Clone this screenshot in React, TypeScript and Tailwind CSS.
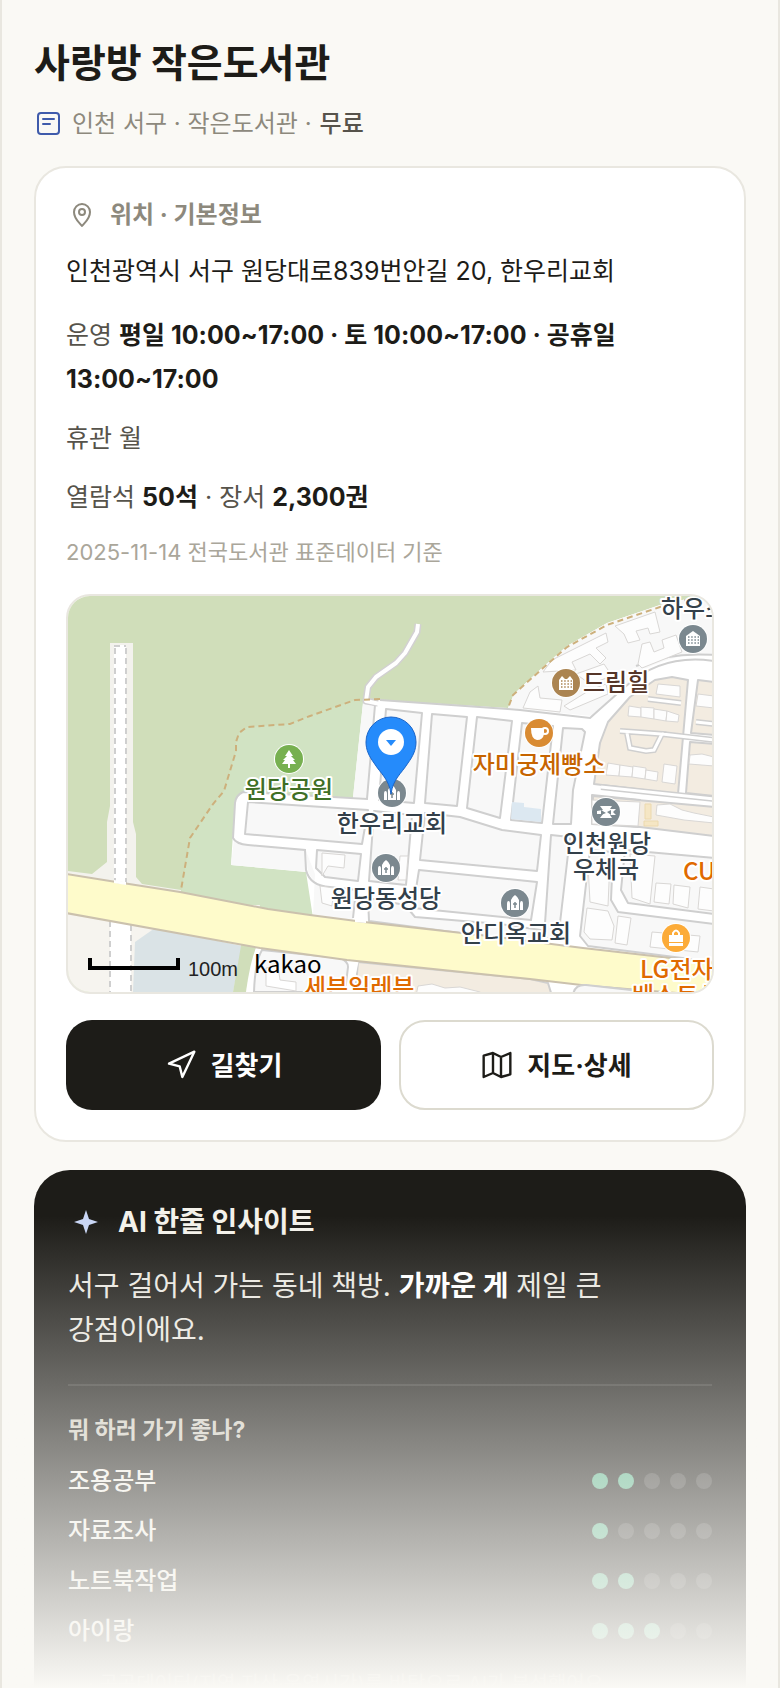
import React from 'react';

interface Purpose {
    label: string;
    score: number;
}

interface Place {
    name: string;
    x: number;
    y: number;
    color: string;
    anchor?: 'start' | 'middle';
}

const PURPOSES: Purpose[] = [
    { label: '조용공부', score: 2 },
    { label: '자료조사', score: 1 },
    { label: '노트북작업', score: 2 },
    { label: '아이랑', score: 3 },
];

const PLACES: Place[] = [
    { name: '하우스', x: 661, y: 617, color: '#33404a', anchor: 'start' },
    { name: '드림힐', x: 583, y: 691, color: '#553528', anchor: 'start' },
    { name: '자미궁제빵소', x: 539, y: 773, color: '#c66400' },
    { name: '원당공원', x: 289, y: 798, color: '#3f6f26' },
    { name: '한우리교회', x: 392, y: 832, color: '#33404a' },
    { name: '원당동성당', x: 386, y: 907, color: '#33404a' },
    { name: '안디옥교회', x: 516, y: 942, color: '#33404a' },
    { name: '인천원당', x: 607, y: 852, color: '#33404a' },
    { name: '우체국', x: 606, y: 878, color: '#33404a' },
    { name: 'CU', x: 683, y: 880, color: '#e06a00', anchor: 'start' },
    { name: 'LG전자', x: 640, y: 978, color: '#e06a00', anchor: 'start' },
    { name: '베스트샵', x: 632, y: 1004, color: '#e06a00', anchor: 'start' },
    { name: '세븐일레븐', x: 304, y: 996, color: '#e06a00', anchor: 'start' },
];

// city blocks between the streets
const BLOCKS = [
    'M386 709 422 713 414 803 379 800Z',
    'M432 714 467 717 457 806 425 803Z',
    'M477 717 512 721 500 818 467 808Z',
    'M522 723 553 726 542 823 511 820Z',
    'M563 728 582 729 585 732 573 790 571 824 553 824Z',
    'M248 802 368 810 362 844 245 834Z',
    'M374 811 412 815 406 885 369 881Z',
    'M317 850 361 854 358 881 325 877 316 868Z',
    'M425 813 460 817 502 830 541 835 537 871 420 860Z',
    'M419 870 537 882 531 920 413 908Z',
    'M368 898 405 905 415 917 500 924 541 930 539 942 475 935 369 921Z',
    'M551 835 570 837 558 940 544 938Z',
    'M590 850 613 852 611 900 618 912 714 924 714 962 588 946 580 936Z',
    'M625 850 714 858 714 914 628 903 621 890Z',
    'M592 795 640 800 638 827 592 824Z',
];

const ORANGE_BLOCKS = [
    'M600 743 608 722 630 697 655 680 672 677 688 680 678 794 594 784Z',
    'M698 680 714 682 714 735 691 733Z',
    'M690 742 714 744 714 796 686 793Z',
    'M593 796 714 807 714 836 640 827 592 822Z',
    'M358 962 530 979 548 983 552 996 355 996Z',
];

const BUILDINGS = [
    'M615 626 655 612 660 632 650 634 648 628 636 631 640 640 628 643 624 634Z',
    'M638 664 642 644 650 642 654 652 664 648 662 640 676 635 682 652 642 668Z',
    'M543 672 552 660 572 650 606 633 608 642 596 648 606 658 600 664 590 654 572 662 576 670Z',
    'M523 708 530 692 538 686 540 698 562 700 560 712 542 710Z',
    'M564 706 590 690 606 684 608 694 570 710Z',
    'M576 674 604 664 612 676 590 684Z',
    'M658 684 680 686 680 697 656 694Z',
    'M629 706 641 708 641 717 628 716Z',
    'M641 707 654 708 654 719 641 717Z',
    'M654 709 667 711 666 721 654 719Z',
    'M667 711 679 715 678 722 666 721Z',
    'M608 763 620 765 619 776 606 775Z',
    'M620 765 633 767 632 777 619 776Z',
    'M633 766 646 768 645 779 632 777Z',
    'M646 770 658 772 657 781 645 779Z',
    'M664 764 677 766 675 784 662 782Z',
    'M698 694 714 696 714 708 696 706Z',
    'M690 755 702 754 714 757 714 766 689 764Z',
    'M657 805 670 804 682 810 694 813 714 817 714 823 684 820 656 815Z',
    'M592 800 640 802 638 826 592 824Z',
    'M322 853 345 855 344 868 328 866 322 876Z',
    'M400 856 408 856 406 880 398 880Z',
    'M588 865 610 860 608 906 590 902Z',
    'M630 854 655 856 650 904 632 898Z',
    'M656 883 671 884 669 904 654 902Z',
    'M674 885 690 887 688 908 673 904Z',
    'M700 887 714 889 714 911 698 909Z',
    'M587 908 608 911 614 926 612 940 590 939 584 932Z',
    'M618 916 631 918 627 945 615 943Z',
    'M652 932 700 936 698 952 650 947Z',
    'M320 886 334 888 332 906 322 903Z',
    'M418 986 432 984 445 988 460 987 480 992 486 996 416 996Z',
];

const LANES = [
    'M648 699 681 703',
    'M620 731 662 734 654 750 646 751 630 748 627 733M662 734 714 740',
    'M696 722 714 724',
    'M601 787 714 799',
];

const DASHES = 'M690 599 660 607 607 625 567 647 543 668 513 695 508 708M380 699 355 700 310 716 290 724 247 727 239 733 236 742 236 751 224 791 213 804 190 838 181 890';

const MapMarker: React.FC<{ x: number; y: number; fill: string; children: React.ReactNode }> = ({ x, y, fill, children }) => (
    <g transform={`translate(${x} ${y})`}>
        <circle r="15" fill="#fff" />
        <circle r="14" fill={fill} />
        {children}
    </g>
);

const Church = () => (
    <>
        <path d="M-4 7V-3Q-3-6 0-8 3-6 4-3V7ZM-8 7V1Q-8-2-6.5-2-5-2-5 1V7ZM8 7V1Q8-2 6.5-2 5-2 5 1V7Z" fill="#fff" />
        <path d="M0-1v6M-2 1h4" stroke="#7b888f" strokeWidth="1.5" />
    </>
);

const House = ({ dots }: { dots: string }) => (
    <>
        <path d="M-7 7V-3L-4-7-1-4 1-4 4-7 7-3V7Z" fill="#fff" />
        <path d="M-5-2H6M-5 1H6M-5 4H6" stroke={dots} strokeWidth="1.5" strokeDasharray="1.5 1.7" />
    </>
);

const Tower = () => (
    <>
        <path d="M-7 7V-3L0-8 7-3V7Z" fill="#fff" />
        <path d="M-5-2H6M-5 1H6M-5 4H6" stroke="#7b888f" strokeWidth="1.5" strokeDasharray="1.5 1.7" />
    </>
);

const LibraryMap = () => (
    <svg viewBox="68 596 644 396" className="block w-full" role="img" aria-label="사랑방 작은도서관 주변 지도">
        <rect x="68" y="596" width="644" height="396" fill="#d0deba" />
        <path d="M363 702 355 700 310 716 290 724 247 727 239 733 236 742 236 751 224 791 213 804 190 838 181 892 330 924 370 700Z" fill="#d1e3c3" />
        <path d="M68 871 92 874 107 862 107 822 110 806V643H133V822L136 834V877L142 884 181 890V900L68 890Z" fill="#f3f2ed" />
        <path d="M114 645H126V890H114Z" fill="#fff" />
        <path d="M114 646H126M115 648V884M126 648V884" stroke="#cfcfcf" strokeWidth="2" strokeDasharray="6 4" fill="none" />

        <path d="M363 703 378 700 508 708 514 694 543 667 567 646 607 623 660 605 700 596H714V1000H350L313 918 306 872 231 865 235 800 242 792 353 798Z" fill="#fff" />
        <path d="M508 708 514 694 543 667 567 646 607 623 660 605 700 596H714V655C690 652 660 660 640 672L592 716Z" fill="#f8f8f8" />
        <path d="M363 703 375 705 367 799 353 797Z" fill="#f8f8f8" />
        <path d="M234 840 248 845 305 850 307 872 231 865Z" fill="#f8f8f8" />
        <path d="M306 851 308 872 315 883 330 887 355 890 353 920 313 915 315 874Z" fill="#f8f8f8" />

        <path d="M375 705 367 799 243 792Q236 795 235 803L233 838Q236 844 248 845L305 850 306 870Q310 886 330 887L356 890 353 918M375 705 366 702M380 700 508 709 520 710 590 718Q610 700 625 687C650 664 680 656 714 661M636 666Q670 652 714 655" fill="none" stroke="#cfcfcf" strokeWidth="2" />
        <path d="M418 624 417 632 405 653 396 663 376 677 368 687 366 701 378 703" fill="none" stroke="#d2d0d2" strokeWidth="7" strokeLinejoin="round" />
        <path d="M418 624 417 632 405 653 396 663 376 677 368 687 366 701 380 704" fill="none" stroke="#fff" strokeWidth="4" strokeLinejoin="round" />

        {BLOCKS.map((d) => (
            <path key={d} d={d} fill="#f8f8f8" stroke="#cfcfcf" strokeWidth="2" strokeLinejoin="round" />
        ))}
        {ORANGE_BLOCKS.map((d) => (
            <path key={d} d={d} fill="#f3ece1" stroke="#cfcfcf" strokeWidth="2" strokeLinejoin="round" />
        ))}
        {LANES.map((d) => (
            <g key={d} fill="none">
                <path d={d} stroke="#cfcfcf" strokeWidth="6" />
                <path d={d} stroke="#fff" strokeWidth="3" />
            </g>
        ))}
        {BUILDINGS.map((d) => (
            <path key={d} d={d} fill="#fdfdfd" stroke="#d9d7d5" strokeWidth="1" />
        ))}
        <path d="M512 802 524 803 524 807 541 809 541 822 511 819Z" fill="#dce8f1" />
        <path d="M645 804h6v15h-6ZM644 821h14v5h-14Z" fill="#f5e6c4" stroke="#ecd9ae" />
        <path d={DASHES} fill="none" stroke="#cdb07c" strokeWidth="2" strokeDasharray="6 4" />

        {/* lower left corner, under the main road */}
        <path d="M68 905H260L246 992H68Z" fill="#f6f4ef" />
        <path d="M135 942 155 928 242 946 233 992H133Z" fill="#dae3e6" />
        <path d="M242 940 257 942 253 955 246 992H233Z" fill="#d0deba" />
        <path d="M257 945 360 955 352 992H246Q250 962 257 945Z" fill="#fff" />
        <path d="M262 950 340 958Q348 961 348 967L345 992H254Q255 962 262 950Z" fill="#f8f8f8" stroke="#cfcfcf" strokeWidth="2" />
        <path d="M266 968 278 966 280 980 296 982 296 991 266 986Z" fill="#fff" stroke="#d9d7d5" />
        <path d="M110 915H131V992H110Z" fill="#fff" />
        <path d="M110 921V992M131 925V992" stroke="#cfcfcf" strokeWidth="2" strokeDasharray="6 4" />

        <path d="M66 874 110 881 180 892 268 909 310 915 364 922 480 935 583 948 714 963V996L590 986 530 979 347 960 260 948 66 913Z" fill="#fefbcb" stroke="#cbc1ad" strokeWidth="2" />
        <path d="M114 880 126 882V885L114 883ZM355 919 366 920 366 923 355 922Z" fill="#fff" />
        <path d="M573 996Q574 984 586 985L640 991V996Z" fill="#f8f8f8" stroke="#cfcfcf" strokeWidth="2" />

        <MapMarker x={566} y={683} fill="#ab8451"><House dots="#ab8451" /></MapMarker>
        <MapMarker x={693} y={639} fill="#7b888f"><Tower /></MapMarker>
        <MapMarker x={539} y={733} fill="#d98b33">
            <path d="M-8-5H5V1Q4 7-2 7-8 6-8-5Z" fill="#fff" />
            <circle cx="6" cy="-2" r="3" fill="none" stroke="#fff" strokeWidth="2" />
        </MapMarker>
        <MapMarker x={289} y={759} fill="#77b050">
            <path d="M0-9 4-3H2L6 1H4L7 5H1V9H-1V5H-7L-4 1H-6L-2-3H-4Z" fill="#fff" />
        </MapMarker>
        <MapMarker x={392} y={793} fill="#7b888f"><Church /></MapMarker>
        <MapMarker x={386} y={868} fill="#7b888f"><Church /></MapMarker>
        <MapMarker x={515} y={903} fill="#7b888f"><Church /></MapMarker>
        <MapMarker x={606} y={812} fill="#7b888f">
            <path d="M-6-6H6L4-3 10-3 7 0 10 3 4 3 6 6H-6L-3 2-9 2-9-1-3-2Z" fill="#fff" />
            <path d="M-5-2 0 1-5 3ZM1 0 5-2V3Z" fill="#7b888f" />
        </MapMarker>
        <MapMarker x={676} y={938} fill="#fcab38">
            <path d="M-7-3H7V4H-7ZM-7 5H7V8H-7Z" fill="#fff" />
            <path d="M-3-3V-5Q0-10 3-5V-3" fill="none" stroke="#fff" strokeWidth="2" />
        </MapMarker>

        <g fontSize="24" fontWeight="500" stroke="#fff" strokeWidth="4" strokeLinejoin="round" paintOrder="stroke" className="font-['Noto_Sans_CJK_KR',sans-serif]">
            {PLACES.map((place) => (
                <text key={place.name} x={place.x} y={place.y} fill={place.color} textAnchor={place.anchor ?? 'middle'}>
                    {place.name}
                </text>
            ))}
        </g>

        <path d="M391 794C389 779 381 774 374 763 369 756 366 750 366 742A25 25 0 0 1 416 742C416 750 413 756 408 763 401 774 393 779 391 794Z" fill="#258bfb" stroke="#1b65c8" strokeWidth="1" />
        <circle cx="391" cy="742" r="13" fill="#fff" />
        <path d="M386 740H396L391 746Z" fill="#258bfb" />

        <path d="M90 958V968H178V958" fill="none" stroke="#000" strokeWidth="4" />
        <text x="188" y="976" fontSize="20" fill="#222" className="font-['Liberation_Sans',sans-serif]">100m</text>
        <text x="254" y="973" fontSize="24" fill="#000" className="font-['Noto_Sans_CJK_KR',sans-serif]">kakao</text>
    </svg>
);

const InfoCard = () => (
    <section className="rounded-[32px] border-2 border-[#e9e7e0] bg-white px-[30px] pt-[29px] pb-[30px]">
        <h2 className="flex items-center gap-3.5 pl-0.5 text-[24px] leading-9 font-bold text-[#8d897d]">
            <svg className="h-7 w-7" viewBox="0 0 28 28" fill="none" stroke="currentColor" strokeWidth="2" strokeLinejoin="round" aria-hidden="true">
                <path d="M14 25C11 21 6 18 6 11a8 8 0 0 1 16 0c0 7-5 10-8 14Z" />
                <circle cx="14" cy="11" r="3" />
            </svg>
            위치 · 기본정보
        </h2>
        <p className="mt-1 text-[25px] leading-[68px] text-[#1d1c18]">인천광역시 서구 원당대로839번안길 20, 한우리교회</p>
        <div className="mt-2 space-y-[15px] text-[25px] leading-[44px] text-[#56534b]">
            <p>운영 <b className="font-bold text-[#1d1c18]">평일 10:00~17:00 · 토 10:00~17:00 · 공휴일 13:00~17:00</b></p>
            <p>휴관 월</p>
            <p>열람석 <b className="font-bold text-[#1d1c18]">50석</b> · 장서 <b className="font-bold text-[#1d1c18]">2,300권</b></p>
        </div>
        <p className="mt-4 text-[22px] leading-[34px] text-[#aaa69a]">2025-11-14 전국도서관 표준데이터 기준</p>
        <div className="mt-[25px] overflow-hidden rounded-3xl border-2 border-[#e9e7e0]">
            <LibraryMap />
        </div>
        <div className="mt-[26px] grid grid-cols-2 gap-[18px]">
            <button type="button" className="flex h-[90px] items-center justify-center gap-3.5 rounded-[26px] bg-[#1d1c18] text-[26px] font-bold text-white">
                <svg className="h-8 w-8" viewBox="0 0 24 24" fill="none" stroke="currentColor" strokeWidth="1.8" strokeLinejoin="round" aria-hidden="true">
                    <path d="M3 11 22 2 13 21 11 13Z" />
                </svg>
                길찾기
            </button>
            <button type="button" className="flex h-[90px] items-center justify-center gap-3.5 rounded-[26px] border-2 border-[#dcdacf] bg-white text-[26px] font-bold text-[#1d1c18]">
                <svg className="h-8 w-8" viewBox="0 0 24 24" fill="none" stroke="currentColor" strokeWidth="1.8" strokeLinejoin="round" aria-hidden="true">
                    <path d="M9 3 2 5v16l7-3 6 3 7-2V3l-7 3ZM9 3v15M15 6v15" />
                </svg>
                지도·상세
            </button>
        </div>
    </section>
);

const InsightCard = () => (
    <section className="mt-7 rounded-t-[36px] bg-[#1d1c18] px-[34px] pt-[34px] pb-8">
        <h2 className="flex items-center gap-5 pl-1.5 text-[28px] leading-9 font-bold text-[#f3f1ea]">
            <svg className="h-6 w-6 text-[#c9d6f5]" viewBox="0 0 24 24" fill="currentColor" aria-hidden="true">
                <path d="M12 0 15 9 24 12 15 15 12 24 9 15 0 12 9 9Z" />
            </svg>
            AI 한줄 인사이트
        </h2>
        <p className="mt-6 text-[28px] leading-[44px] text-[#e9e7e0]">
            서구 걸어서 가는 동네 책방. <b className="font-bold text-white">가까운 게</b> 제일 큰 <br />
            강점이에요.
        </p>
        <div className="mt-8 border-t-2 border-white/10 pt-7">
            <h3 className="text-[23px] leading-8 font-bold text-[#d0cdc2]">뭐 하러 가기 좋나?</h3>
            <ul className="mt-2.5 text-[24px] leading-[50px] font-medium text-[#f3f1ea]">
                {PURPOSES.map((purpose) => (
                    <li key={purpose.label} className="flex items-center justify-between">
                        {purpose.label}
                        <span className="flex gap-2.5" role="img" aria-label={`5점 중 ${purpose.score}점`}>
                            {[1, 2, 3, 4, 5].map((n) => (
                                <i key={n} className={n <= purpose.score ? 'h-4 w-4 rounded-full bg-[#5bb48c]' : 'h-4 w-4 rounded-full bg-white/15'} />
                            ))}
                        </span>
                    </li>
                ))}
            </ul>
        </div>
        <p className="mt-4 pl-5 text-[20px] leading-6 text-[#8d897d]">· 공공데이터(지역·자산·운영시간)를 바탕으로 AI가 분석했어요</p>
    </section>
);

// teaser view: one screen of the detail page, faded out towards the bottom
const App: React.FC = () => {
    return (
        <main className="relative h-screen overflow-hidden border-x-2 border-[#e9e7e0] bg-[#faf9f5] px-8 pt-9 font-[Inter,'Noto_Sans_CJK_KR',sans-serif]">
            <header>
                <h1 className="text-[39px] leading-[54px] font-bold text-[#1d1c18]">사랑방 작은도서관</h1>
                <p className="mt-4 flex items-center text-[24px] leading-9 text-[#8d897d]">
                    <svg className="mr-3 h-[26px] w-[26px]" viewBox="0 0 26 26" fill="none" stroke="#3f5bab" strokeWidth="2" strokeLinecap="round" aria-hidden="true">
                        <rect x="4" y="2" width="21" height="21" rx="3" />
                        <path d="M9 8h11M9 13h7" />
                    </svg>
                    인천 서구 · 작은도서관 ·
                    <span className="ml-2 font-medium text-[#56534b]">무료</span>
                </p>
            </header>
            <div className="mt-6">
                <InfoCard />
                <InsightCard />
            </div>
            <div className="pointer-events-none absolute -inset-x-0.5 bottom-0 h-[472px] bg-linear-to-b from-[#faf9f5]/0 to-[#faf9f5]" />
        </main>
    );
};

export default App;
